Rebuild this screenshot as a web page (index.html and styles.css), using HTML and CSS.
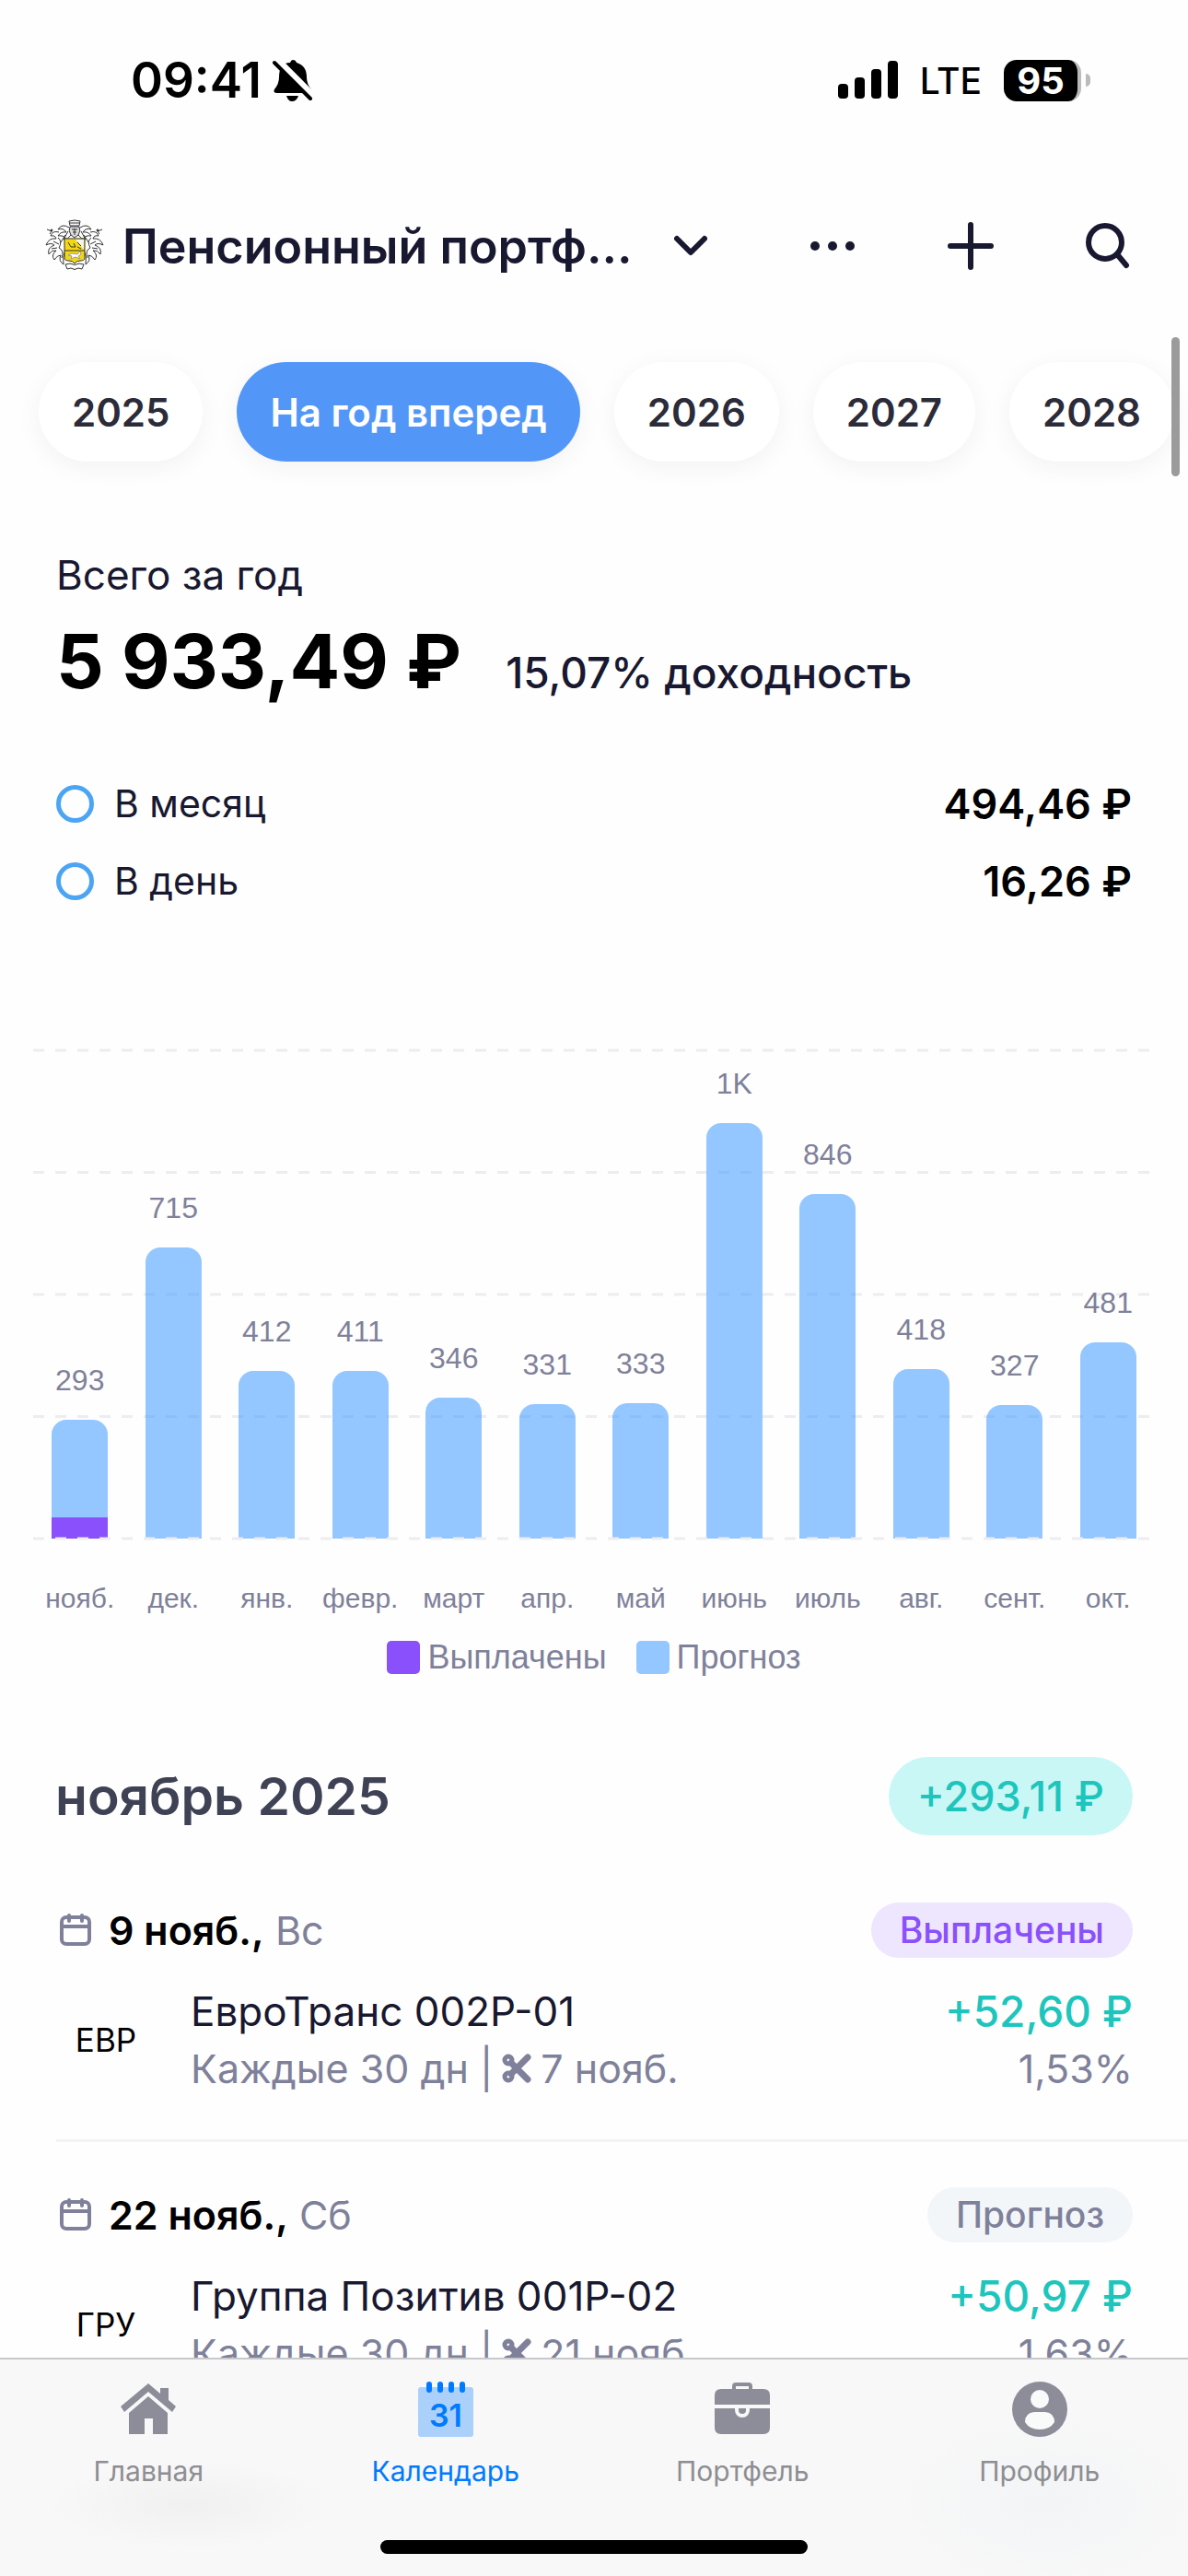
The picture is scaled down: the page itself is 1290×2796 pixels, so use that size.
FILE: index.html
```html
<!DOCTYPE html>
<html lang="ru">
<head>
    <meta charset="UTF-8">
    <meta name="viewport" content="width=device-width, initial-scale=1.0">
    <title>Календарь выплат</title>
    <link rel="stylesheet" href="styles.css">
</head>
<body>
    <div class="app">
        <div class="status-bar">
            <div class="status-left">
                <span class="time">09:41</span>
                <svg class="bell" width="44" height="46" viewBox="0 0 44 46">
                    <path d="M2 33 Q7 27 7 20 Q7 4 19 4 Q20 1 22 1 Q25 1 26 4 Q37 7 37 20 Q37 27 42 33 Q43 37 39 37 H5 Q0 37 2 33 Z"/>
                    <path d="M15 40 H28 Q26 46 21 46 Q17 46 15 40 Z"/>
                    <path d="M4 1 L44 41" stroke="#fff" stroke-width="9"/>
                    <path d="M2 4 L41 43" stroke="#000" stroke-width="4" stroke-linecap="round"/>
                </svg>
            </div>
            <div class="status-right">
                <svg width="65" height="42" viewBox="0 0 65 42">
                    <rect x="0" y="25" width="11" height="16" rx="4"/>
                    <rect x="18" y="18" width="11" height="23" rx="4"/>
                    <rect x="36" y="9" width="11" height="32" rx="4"/>
                    <rect x="54" y="0" width="11" height="41" rx="4"/>
                </svg>
                <span class="network">LTE</span>
                <div class="battery">
                    <span class="battery-level">95</span>
                    <span class="battery-cap"></span>
                </div>
            </div>
        </div>

        <header class="header">
            <svg class="crest" width="64" height="58" viewBox="0 0 64 58" fill="none" stroke="#333" stroke-width="1">
                <path d="M26 2 Q32 0 38 2 L37 7 H27 Z M27 4 H37"/>
                <path d="M27 8 Q25 13 28 17 L32 20 L36 17 Q39 13 37 8 Z M29 11 H35 M30 14 H34 M32 10 V17" fill="#ddd"/>
                <path d="M26 9 Q18 4 14 11 Q20 9 23 14 Q17 13 14 18 Q20 17 22 21 M22 17 L17 25 M25 13 L20 22 Q25 22 28 17"/>
                <path d="M38 9 Q46 4 50 11 Q44 9 41 14 Q47 13 50 18 Q44 17 42 21 M42 17 L47 25 M39 13 L44 22 Q39 22 36 17"/>
                <path d="M15 14 Q8 12 6 18 Q11 17 12 21 Q4 20 1 28 Q7 25 10 28 Q2 31 4 38 Q7 33 12 34 Q6 39 10 44 Q13 39 17 39 Q14 45 20 49 Q19 41 21 36 M14 20 Q19 24 15 31 Q21 34 18 42"/>
                <path d="M49 14 Q56 12 58 18 Q53 17 52 21 Q60 20 63 28 Q57 25 54 28 Q62 31 60 38 Q57 33 52 34 Q58 39 54 44 Q51 39 47 39 Q50 45 44 49 Q45 41 43 36 M50 20 Q45 24 49 31 Q43 34 46 42"/>
                <path d="M2 11 L7 13 L5 16 M62 11 L57 13 L59 16 M9 24 L15 27 M55 24 L49 27 M7 32 L13 31 M57 32 L51 31"/>
                <circle cx="7" cy="12" r="1" fill="#333"/>
                <circle cx="57" cy="12" r="1" fill="#333"/>
                <path d="M21 21 H43 V42 Q43 45 38 45 Q34 45 32 48 Q30 45 26 45 Q21 45 21 42 Z" fill="#f4d713"/>
                <path d="M33 22 H42 V33 Z" fill="#f3f3ef" stroke="none"/>
                <path d="M21 34 H43 M25 25 L28 30 H33 L31 26 M35 25 L39 29 M35 30 L39 32"/>
                <path d="M25 39 L29 37 L35 38 L38 35 L39 38 L36 40 L38 43 L33 41 L28 43 L29 40 Z" fill="#fff" stroke="#999"/>
                <path d="M22 49 L27 48 Q32 51 37 48 L42 49 L40 54 L36 53 Q32 56 28 53 L24 54 Z"/>
            </svg>
            <h1 class="title">Пенсионный портф...</h1>
            <button class="icon-button chevron" aria-label="Выбрать портфель">
                <svg width="36" height="24" viewBox="0 0 36 24"><path d="M3 4 L18 19 L33 4"/></svg>
            </button>
            <div class="header-actions">
                <button class="icon-button" aria-label="Ещё">
                    <svg width="52" height="52" viewBox="0 0 52 52"><circle class="dot" cx="7" cy="26" r="5"/><circle class="dot" cx="26" cy="26" r="5"/><circle class="dot" cx="45" cy="26" r="5"/></svg>
                </button>
                <button class="icon-button" aria-label="Добавить">
                    <svg width="52" height="52" viewBox="0 0 52 52"><path d="M26 3 V49 M4 26 H48"/></svg>
                </button>
                <button class="icon-button" aria-label="Поиск">
                    <svg width="52" height="52" viewBox="0 0 52 52"><circle cx="22" cy="22" r="18"/><path d="M35 35 L45 47"/></svg>
                </button>
            </div>
        </header>

        <main class="content">
            <div class="periods">
                <button class="chip">2025</button>
                <button class="chip chip-active">На год вперед</button>
                <button class="chip">2026</button>
                <button class="chip">2027</button>
                <button class="chip">2028</button>
            </div>

            <section class="summary">
                <div class="summary-label">Всего за год</div>
                <div class="summary-total">
                    <strong class="total">5 933,49 ₽</strong>
                    <span class="yield">15,07% доходность</span>
                </div>
                <div class="stat"><span class="ring"></span><span>В месяц</span><strong class="stat-value">494,46 ₽</strong></div>
                <div class="stat"><span class="ring"></span><span>В день</span><strong class="stat-value">16,26 ₽</strong></div>
            </section>

            <section class="chart">
                <div class="plot">
                    <svg class="grid-lines">
                        <line x1="0" x2="100%" y1="0" y2="0"/>
                        <line x1="0" x2="100%" y1="25%" y2="25%"/>
                        <line x1="0" x2="100%" y1="50%" y2="50%"/>
                        <line x1="0" x2="100%" y1="75%" y2="75%"/>
                    </svg>
                    <div class="column"><span>293</span><div class="bar" style="height: 24.4%"><div class="bar-paid" style="height: 17.9%"></div></div></div>
                    <div class="column"><span>715</span><div class="bar" style="height: 59.6%"></div></div>
                    <div class="column"><span>412</span><div class="bar" style="height: 34.3%"></div></div>
                    <div class="column"><span>411</span><div class="bar" style="height: 34.3%"></div></div>
                    <div class="column"><span>346</span><div class="bar" style="height: 28.8%"></div></div>
                    <div class="column"><span>331</span><div class="bar" style="height: 27.6%"></div></div>
                    <div class="column"><span>333</span><div class="bar" style="height: 27.8%"></div></div>
                    <div class="column"><span>1K</span><div class="bar" style="height: 85.1%"></div></div>
                    <div class="column"><span>846</span><div class="bar" style="height: 70.5%"></div></div>
                    <div class="column"><span>418</span><div class="bar" style="height: 34.8%"></div></div>
                    <div class="column"><span>327</span><div class="bar" style="height: 27.3%"></div></div>
                    <div class="column"><span>481</span><div class="bar" style="height: 40.1%"></div></div>
                    <svg class="grid-lines"><line x1="0" x2="100%" y1="100%" y2="100%"/></svg>
                </div>
                <div class="months">
                    <span>нояб.</span><span>дек.</span><span>янв.</span><span>февр.</span><span>март</span><span>апр.</span>
                    <span>май</span><span>июнь</span><span>июль</span><span>авг.</span><span>сент.</span><span>окт.</span>
                </div>
                <div class="legend">
                    <span class="legend-item"><i class="swatch swatch-paid"></i>Выплачены</span>
                    <span class="legend-item"><i class="swatch"></i>Прогноз</span>
                </div>
            </section>

            <section class="payments">
                <div class="month-head">
                    <h2>ноябрь 2025</h2>
                    <span class="month-sum">+293,11 ₽</span>
                </div>

                <article class="payment">
                    <div class="payment-date">
                        <svg class="calendar-icon" width="36" height="36" viewBox="0 0 36 36"><rect x="3" y="4" width="30" height="29" rx="5"/><path d="M3 14 H33 M11 2 V8 M25 2 V8"/></svg>
                        <span><b>9 нояб.,</b> Вс</span>
                        <span class="badge badge-paid">Выплачены</span>
                    </div>
                    <div class="payment-body">
                        <span class="ticker">ЕВР</span>
                        <div class="payment-info">
                            <div class="name">ЕвроТранс 002Р-01</div>
                            <div class="details">Каждые 30 дн |<svg class="scissors" width="32" height="32" viewBox="0 0 32 32"><circle cx="7" cy="7" r="4"/><circle cx="7" cy="25" r="4"/><path class="blade" d="M10 10 L28 28 M10 22 L28 4"/></svg>7 нояб.</div>
                        </div>
                        <div class="payment-sum">
                            <div class="amount">+52,60 ₽</div>
                            <div class="details">1,53%</div>
                        </div>
                    </div>
                </article>

                <article class="payment">
                    <div class="payment-date">
                        <svg class="calendar-icon" width="36" height="36" viewBox="0 0 36 36"><rect x="3" y="4" width="30" height="29" rx="5"/><path d="M3 14 H33 M11 2 V8 M25 2 V8"/></svg>
                        <span><b>22 нояб.,</b> Сб</span>
                        <span class="badge">Прогноз</span>
                    </div>
                    <div class="payment-body">
                        <span class="ticker">ГРУ</span>
                        <div class="payment-info">
                            <div class="name">Группа Позитив 001Р-02</div>
                            <div class="details">Каждые 30 дн |<svg class="scissors" width="32" height="32" viewBox="0 0 32 32"><circle cx="7" cy="7" r="4"/><circle cx="7" cy="25" r="4"/><path class="blade" d="M10 10 L28 28 M10 22 L28 4"/></svg>21 нояб.</div>
                        </div>
                        <div class="payment-sum">
                            <div class="amount">+50,97 ₽</div>
                            <div class="details">1,63%</div>
                        </div>
                    </div>
                </article>
            </section>
        </main>

        <nav class="tab-bar">
            <div class="tabs">
                <a class="tab" href="#">
                    <svg width="60" height="60" viewBox="0 0 60 60">
                        <path d="M30 2 L43 13 V7 H52 V20 L60 27 L56 33 L30 11 L4 33 L0 27 Z"/>
                        <path d="M30 16 L51 34 V57 H35 V40 H26 V57 H9 V34 Z"/>
                    </svg>
                    Главная
                </a>
                <a class="tab tab-active" href="#">
                    <svg width="60" height="60" viewBox="0 0 60 60">
                        <rect x="0" y="6" width="60" height="54" rx="3" fill="#abd1fa"/>
                        <rect x="9" y="0" width="6" height="12" rx="3"/>
                        <rect x="21" y="0" width="6" height="12" rx="3"/>
                        <rect x="33" y="0" width="6" height="12" rx="3"/>
                        <rect x="45" y="0" width="6" height="12" rx="3"/>
                        <text class="day" x="30" y="49" text-anchor="middle">31</text>
                    </svg>
                    Календарь
                </a>
                <a class="tab" href="#">
                    <svg width="60" height="60" viewBox="0 0 60 60">
                        <path d="M21 10 V5 Q21 3 23 3 H37 Q39 3 39 5 V10" fill="none" stroke="currentColor" stroke-width="4"/>
                        <path d="M0 25 V15 Q0 8 7 8 H53 Q60 8 60 15 V25 Z"/>
                        <path d="M0 29 H22 V31 A8 8 0 0 0 38 31 V29 H60 V50 Q60 57 53 57 H7 Q0 57 0 50 Z"/>
                        <path d="M26 29 H34 V31 A4 4 0 0 1 26 31 Z"/>
                    </svg>
                    Портфель
                </a>
                <a class="tab" href="#">
                    <svg width="60" height="60" viewBox="0 0 60 60">
                        <circle cx="30" cy="30" r="30"/>
                        <circle cx="30" cy="19" r="10" fill="#fafafa"/>
                        <path d="M24 33 H36 Q46 34 46 44 Q41 52 30 52 Q19 52 14 44 Q14 34 24 33 Z" fill="#fafafa"/>
                    </svg>
                    Профиль
                </a>
            </div>
            <div class="home-indicator"></div>
        </nav>
        <div class="scrollbar"></div>
    </div>
</body>
</html>
```
FILE: styles.css
```css
* {
    box-sizing: border-box;
}
body {
    margin: 0;
    font-family: Inter, sans-serif;
    font-size: 41px;
    color: #181830;
    background-color: #fefefe;
}
h1, h2 {
    margin: 0;
    font-weight: 600;
}
button {
    border: none;
    padding: 0;
    background: none;
    font-family: inherit;
    cursor: pointer;
}
.app {
    position: relative;
    display: flex;
    flex-direction: column;
    height: 100vh;
    overflow: hidden;
}

/* status bar */
.status-bar {
    flex: none;
    display: flex;
    justify-content: space-between;
    align-items: center;
    height: 174px;
    padding: 0 106px 0 142px;
    color: #000;
}
.status-left {
    display: flex;
    align-items: center;
    gap: 12px;
}
.status-right {
    display: flex;
    align-items: center;
    gap: 24px;
}
.time {
    font-size: 53px;
    font-weight: 600;
}
.network {
    font-size: 39px;
    font-weight: 500;
}
.battery {
    display: flex;
    align-items: center;
    gap: 5px;
}
.battery-level {
    width: 84px;
    height: 45px;
    border-radius: 14px;
    border-right: 4px solid #bbb;
    background-color: #000;
    color: #fff;
    font-size: 40px;
    font-weight: 700;
    line-height: 45px;
    text-align: center;
}
.battery-cap {
    width: 5px;
    height: 14px;
    border-radius: 0 5px 5px 0;
    background-color: #bbb;
}

/* header */
.header {
    flex: none;
    display: flex;
    align-items: center;
    height: 186px;
    padding: 0 60px 0 49px;
}
.title {
    margin-left: 20px;
    font-size: 52px;
}
.icon-button {
    display: flex;
}
.icon-button svg {
    fill: none;
    stroke: #181830;
    stroke-width: 6;
    stroke-linecap: round;
    stroke-linejoin: round;
}
.icon-button .dot {
    fill: #181830;
    stroke: none;
}
.chevron {
    margin-left: 45px;
}
.header-actions {
    display: flex;
    gap: 98px;
    margin-left: auto;
}

.content {
    flex: 1;
    min-height: 0;
    overflow: hidden;
}
.periods {
    display: flex;
    gap: 37px;
    padding: 33px 0 60px 42px;
    overflow: hidden;
}
.chip {
    flex: none;
    height: 108px;
    padding: 0 36px;
    border-radius: 54px;
    background-color: #fff;
    box-shadow: 0 6px 28px rgba(0, 0, 0, 0.05);
    color: #2b2b3a;
    font-size: 42px;
    font-weight: 600;
}
.chip-active {
    background-color: #5297f8;
    color: #fff;
}

/* yearly totals */
.summary {
    padding: 37px 61px 0;
}
.summary-label {
    font-size: 44px;
    line-height: 52px;
}
.summary-total {
    display: flex;
    align-items: baseline;
    gap: 48px;
    margin: 18px 0 50px;
    line-height: 100px;
}
.total {
    color: #000;
    font-size: 81px;
}
.yield {
    font-size: 46px;
    font-weight: 500;
}
.stat {
    display: flex;
    align-items: center;
    gap: 22px;
    height: 84px;
}
.ring {
    width: 41px;
    height: 41px;
    border: 5px solid #4ba5f3;
    border-radius: 50%;
}
.stat-value {
    margin-left: auto;
    color: #000;
    font-size: 45px;
    font-weight: 600;
}

/* chart */
.chart {
    padding: 142px 36px 0;
    color: #7f819a;
    font-family: "Liberation Sans", Arial, sans-serif;
}
.plot {
    position: relative;
    display: flex;
    height: 530px;
}
.grid-lines {
    position: absolute;
    inset: 0;
    width: 100%;
    height: 100%;
    overflow: visible;
    stroke: #ededf1;
    stroke-width: 3;
    stroke-dasharray: 12 12;
}
.column {
    position: relative;
    flex: 1;
    display: flex;
    flex-direction: column;
    align-items: center;
    justify-content: flex-end;
    font-size: 32px;
}
.column span {
    padding-bottom: 24px;
}
.bar {
    display: flex;
    align-items: flex-end;
    width: 60%;
    border-radius: 16px 16px 0 0;
    background-color: rgba(71, 159, 255, 0.58);
}
.bar-paid {
    width: 100%;
    background-color: #8950fc;
}
.months {
    display: flex;
    margin-top: 45px;
    font-size: 30px;
    line-height: 40px;
}
.months span {
    flex: 1 1 0;
    text-align: center;
}
.legend {
    display: flex;
    justify-content: center;
    gap: 32px;
    margin-top: 22px;
    font-size: 36px;
    line-height: 44px;
}
.legend-item {
    display: flex;
    align-items: center;
    gap: 8px;
}
.swatch {
    width: 36px;
    height: 36px;
    border-radius: 5px;
    background-color: #94c7ff;
}
.swatch-paid {
    background-color: #8950fc;
}

/* payments */
.payments {
    padding-top: 85px;
}
.month-head {
    display: flex;
    align-items: center;
    justify-content: space-between;
    height: 86px;
    margin-bottom: 24px;
    padding: 0 60px;
    color: #3f4254;
}
.month-head h2 {
    font-size: 57px;
}
.month-sum {
    padding: 0 31px;
    border-radius: 43px;
    background-color: #c9f7f5;
    color: #1dc5bd;
    font-size: 45px;
    font-weight: 500;
    line-height: 85px;
}
.payment {
    margin-left: 61px;
    padding: 49px 60px 46px 0;
    border-bottom: 3px solid #f3f3f5;
}
.payment-date {
    display: flex;
    align-items: center;
    gap: 18px;
    color: #7f819a;
    font-size: 43px;
}
.payment-date b {
    color: #000;
    font-weight: 600;
}
.calendar-icon {
    margin-left: 3px;
    fill: none;
    stroke: #7f819a;
    stroke-width: 4;
    stroke-linecap: round;
}
.badge {
    margin-left: auto;
    padding: 0 31px;
    border-radius: 30px;
    background-color: #f3f6f9;
    color: #7f819a;
    font-size: 39px;
    font-weight: 500;
    line-height: 60px;
}
.badge-paid {
    background-color: #eee5ff;
    color: #8950fc;
}
.payment-body {
    display: flex;
    align-items: center;
    margin-top: 27px;
    font-size: 43px;
    line-height: 62px;
}
.ticker {
    width: 108px;
    margin-right: 38px;
    color: #000;
    font-size: 35px;
    text-align: center;
}
.name {
    font-size: 44px;
}
.payment-sum {
    margin-left: auto;
    text-align: right;
}
.amount {
    color: #1dc5bd;
    font-size: 46px;
    font-weight: 500;
}
.details {
    display: flex;
    align-items: center;
    justify-content: flex-end;
    gap: 10px;
    color: #7f819a;
}
.payment-info .details {
    justify-content: flex-start;
}
.scissors {
    fill: none;
    stroke: #7f819a;
    stroke-width: 5;
}
.blade {
    stroke-width: 7;
    stroke-linecap: round;
}

/* bottom navigation */
.tab-bar {
    flex: none;
    padding: 24px 0;
    border-top: 2px solid #c8c8ca;
    background-color: #f8f8f8;
    background-image:
        radial-gradient(ellipse 150px 48px at 16% 67%, #f0f0f0, transparent),
        radial-gradient(ellipse 160px 90px at 88% 66%, #f2f4f6, transparent);
}
.tabs {
    display: flex;
}
.tab {
    flex: 1 1 0;
    display: flex;
    flex-direction: column;
    align-items: center;
    gap: 17px;
    color: #8e8e93;
    font-size: 30px;
    line-height: 40px;
    text-decoration: none;
}
.tab svg {
    color: #8d8d99;
    fill: currentColor;
}
.tab-active,
.tab-active svg {
    color: #007aff;
}
.day {
    font-size: 34px;
    font-weight: 600;
}
.home-indicator {
    width: 36%;
    height: 15px;
    margin: 55px auto 0;
    border-radius: 8px;
    background-color: #000;
}
.scrollbar {
    position: absolute;
    top: 366px;
    right: 9px;
    width: 9px;
    height: 151px;
    border-radius: 5px;
    background-color: #9b9b9b;
}
```
